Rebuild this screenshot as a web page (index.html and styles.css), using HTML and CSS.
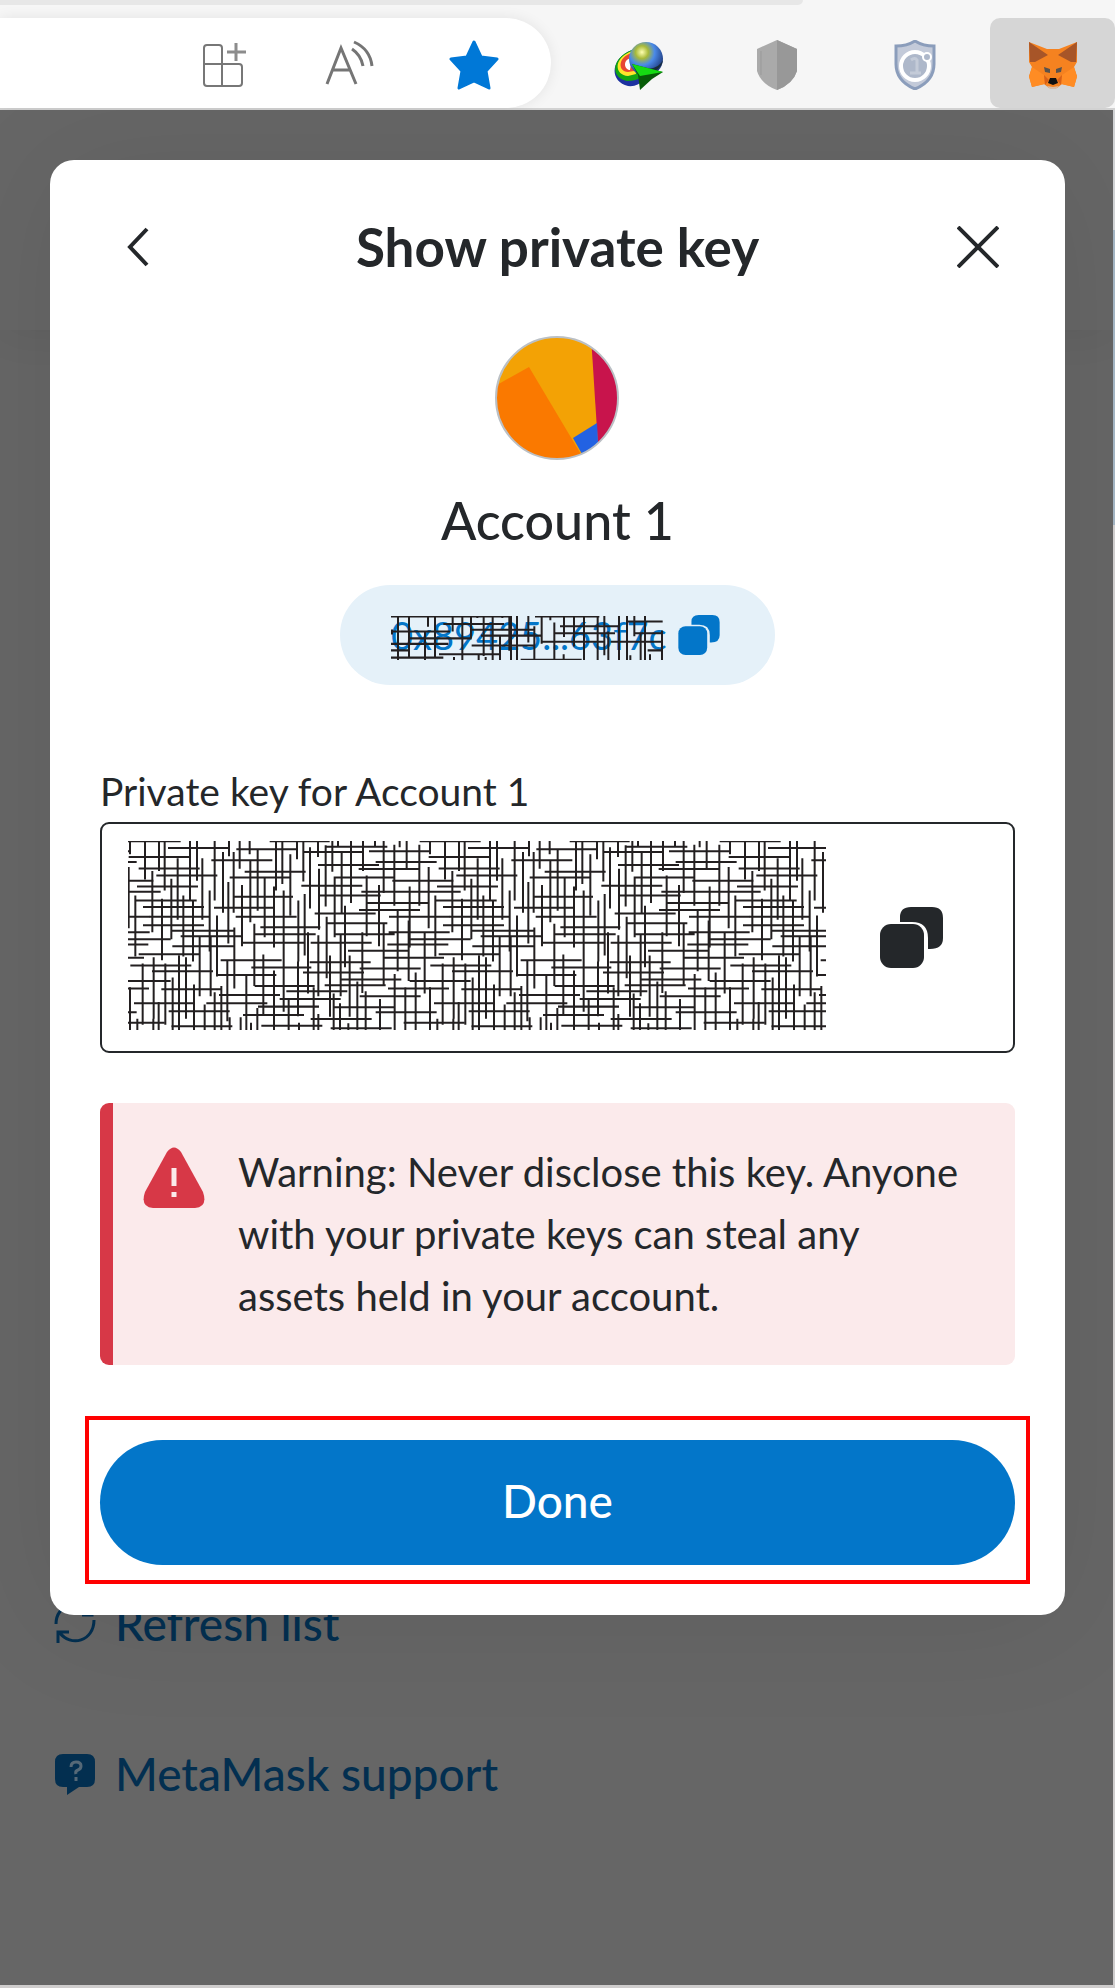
FILE: index.html
```html
<!DOCTYPE html>
<html lang="en">
<head>
<meta charset="utf-8">
<meta name="viewport" content="width=device-width, initial-scale=1">
<title>Show private key</title>
<link rel="stylesheet" href="styles.css">
</head>
<body>
<header class="browser">
  <div class="tab-strip"></div>
  <div class="toolbar">
    <div class="address">
      <button class="tool" aria-label="Add app"><svg viewBox="0 0 50 50" fill="none" stroke="#777" stroke-width="2"><path d="M5 24V8q0-3 3-3h12q3 0 3 3v38M5 24h35q3 0 3 3v16q0 3-3 3H8q-3 0-3-3V24"/><path d="M37 3v18M28 12h19" stroke-width="3" stroke="#8c8c8c"/></svg></button>
      <button class="tool" aria-label="Read aloud"><svg viewBox="0 0 50 50" fill="none" stroke="#757575" stroke-width="3"><path d="M3 44 17 8l15 36M8 30h19"/><path d="M28 9q9 6 11 17M30 2q16 7 18 24"/></svg></button>
      <button class="tool" aria-label="Favorite"><svg viewBox="0 0 50 50"><path fill="#0078d7" stroke="#0078d7" stroke-width="3" stroke-linejoin="round" d="m25 2 7 15 16 2-11 12 3 17-15-7-15 7 3-17L2 19l16-2z"/></svg></button>
    </div>
    <nav class="extensions" aria-label="Extensions">
      <button class="extension" aria-label="Download manager"><svg viewBox="0 0 50 50">
        <defs><radialGradient id="globe" cx=".38" cy=".3" r=".75"><stop offset="0" stop-color="#ffffb0"/><stop offset=".25" stop-color="#a8ba3a"/><stop offset=".5" stop-color="#4b8ae8"/><stop offset="1" stop-color="#172b68"/></radialGradient></defs>
        <path d="M18 10C-4 18-5 42 14 46q10 1 15-6L18 16z" fill="#1d32a0"/><path d="M18 10C-3 18-4 38 13 41q10 0 14-4L18 16z" fill="#12a512"/><path d="M18 11C-1 18 0 35 14 36l8-2-4-18z" fill="#ffe52b"/><path d="M18 13C3 17 4 32 14 32l6-1-2-14z" fill="#e74734"/><path d="M18 18c-10 1-8 12-2 12z" fill="#fff"/>
        <circle cx="32" cy="19" r="17" fill="url(#globe)"/><path d="M41 31q7-4 8-11-3 7-14 9z" fill="#172b38"/><path d="m18 24 31 8-11 7-12 11-2-15z" fill="#075c08"/><path d="m18 24 31 8-23 4z" fill="#16db13"/></svg></button>
      <button class="extension" aria-label="Privacy shield"><svg viewBox="0 0 50 50"><path d="M25 0 45 9v22Q41 44 25 50 9 44 5 31V9z" fill="#aaa"/><path d="M25 0 45 9v22Q41 44 25 50z" fill="#989898"/><path d="M9 11v24" stroke="#999"/></svg></button>
      <button class="extension" aria-label="Security scanner"><svg viewBox="0 0 50 50"><path d="M25 1q8 5 19 5v18q0 17-19 25Q6 41 6 24V6q11 0 19-5z" fill="#c3cad9" stroke="#8b9dbb" stroke-width="3"/><circle cx="25" cy="26" r="14" fill="#aeb8ca" stroke="#fff" stroke-width="4"/><circle cx="37" cy="17" r="4" fill="#aeb8ca" stroke="#fff" stroke-width="2"/><path d="M21 20q4-3 6 0v12M20 33h11" fill="none" stroke="#c4cbd8" stroke-width="3"/></svg></button>
      <button class="extension extension-active" aria-label="MetaMask"><svg viewBox="0 0 50 50"><path d="m1 2 18 7h12l18-7v20l-3 5 3 9-3 11-12-3-5 4h-8l-5-4-12 3L1 36l3-9-3-5z" fill="#f58220"/><path d="m1 2 19 13-13 7H2zM49 2 30 15l13 7h5z" fill="#a75528"/><path d="m4 27 12 8 1 9-13 3-3-10zm42 0-12 8-1 9 13 3 3-10z" fill="#ff8c24"/><path d="m16 35 5 5-4 5zm18 0-5 5 4 5z" fill="#d86118"/><path d="m16 27 6 2v4l-5-1zm18 0-6 2v4l5-1z" fill="#59524c"/><path d="m22 38 6 0 2 5-5 2-5-2z" fill="#111"/><path d="m19 46 6 1 6-1-3 3h-6z" fill="#d9bda7"/></svg></button>
    </nav>
  </div>
</header>

<main class="popup">
  <div class="page">
    <div class="page-header"></div>
    <nav class="page-links">
      <a class="page-link" href="#refresh"><svg class="link-icon" viewBox="0 0 42 42" fill="none" stroke="currentColor" stroke-width="3"><path d="M2 21C2 1 25-5 36 11M40 17c0 21-23 28-35 12M38 1v11H28M4 40V29h11"/></svg>Refresh list</a>
      <a class="page-link" href="#support"><svg class="link-icon" viewBox="0 0 42 42"><path fill="currentColor" d="M9 1h24q8 0 8 8v17q0 8-8 8h-8l-12 8v-8H9q-8 0-8-8V9q0-8 8-8z"/><path d="M17 14q0-5 5-5t5 4q0 3-3 4t-2 4M22 24v4" fill="none" stroke="#566977" stroke-width="3"/></svg>MetaMask support</a>
    </nav>
  </div>

  <section class="modal" role="dialog" aria-labelledby="dialog-title">
    <div class="modal-header">
      <button class="nav-button" aria-label="Back"><svg viewBox="0 0 42 42"><path d="M31 3 14 21l17 18"/></svg></button>
      <h1 class="title" id="dialog-title">Show private key</h1>
      <button class="nav-button" aria-label="Close"><svg viewBox="0 0 42 42"><path d="m1 1 40 40M41 1 1 41"/></svg></button>
    </div>

    <svg class="avatar" viewBox="0 0 125 125" role="img" aria-label="Account avatar">
      <clipPath id="disc"><circle cx="62" cy="62" r="61"/></clipPath>
      <g clip-path="url(#disc)"><path fill="#f3a205" d="M0 0h125v125H0z"/><path fill="#fa7900" d="m0 50 34-19 56 94H0z"/><path fill="#c8144c" d="M96 0h29v125h-21z"/><path fill="#2362e2" d="m78 102 24-15 2 38H91z"/></g>
      <circle cx="62" cy="62" r="61" fill="none" stroke="#bbc0c5" stroke-width="2"/>
    </svg>
    <h2 class="account">Account 1</h2>

    <button class="address-pill" aria-label="Copy account address">
      <span class="short-address">0x89425...63f7c
        <svg class="hatch" viewBox="213 141 816 128" preserveAspectRatio="none"><path d="M213 142H572M645 142H838M370 164H552M920 157H1028M720 171H900M213 186H390M455 181H640M268 206H455M483 198H665M703 191H885M945 191H1028M213 222H385M665 216H855M872 216H1028M455 227H640M213 241H268M357 252H540M983 241H1028M213 262H370M602 268H785M234 141V269M267 141V260M324 141V172M345 141V260M315 186V269M398 141V186M427 141V269M453 141V206M491 141V257M518 141V269M540 195V269M568 141V242M573 141V269M591 141V269M625 141V218M643 171V269M665 141V222M703 160V269M732 141V202M762 141V230M792 141V269M833 141V269M853 141V255M865 186V269M897 141V269M921 141V269M943 141V200M962 188V269M975 141V269M1026 183V269M216 180V195M472 141V147M547 141V147M691 141V153M402 260V269M476 255V269M497 260V269M731 252V269M931 255V269M990 252V269"/></svg>
      </span>
      <svg class="copy-small" viewBox="0 0 63 61"><path d="M20 15V10Q20 0 31 0h21q11 0 11 11v20q0 11-13 11h-2V31q0-16-16-16z"/><rect y="17" width="44" height="44" rx="11"/></svg>
    </button>

    <h3 class="key-label" id="key-label">Private key for Account 1</h3>
    <div class="key-box" role="group" aria-labelledby="key-label">
      <svg class="key-hatch" viewBox="115 242 2094 566" preserveAspectRatio="none">
        <defs><path id="strokes" d="M235 263h183M440 267h183M117 290h183M365 300h183M147 324h183M200 345h183M465 334h183M420 351h183M142 378h183M138 420h183M430 409h180M160 440h183M373 442h183M438 469h183M180 469h183M160 494h183M512 500h180M248 511h183M273 527h183M495 521h183M248 557h183M460 547h183M147 581h183M122 615h183M187 632h183M393 599h183M485 621h180M380 643h180M215 686h183M495 676h180M388 703h183M133 728h183M350 728h183M237 752h183M570 715h183M505 738h183M460 763h183M245 797h183M515 795h183M540 243h180M640 275h183M710 259h183M838 273h183M990 243h183M685 314h183M858 305h183M807 326h183M732 351h183M635 376h183M908 361h183M690 405h183M815 394h183M930 394h183M833 428h183M808 449h183M675 459h183M898 469h183M713 488h180M897 515h183M732 521h183M960 536h183M663 547h183M893 552h183M775 571h183M880 592h183M660 605h183M640 636h183M810 624h183M752 657h183M960 661h183M705 674h183M895 684h183M590 692h183M810 707h183M732 740h183M858 755h183M663 775h183M723 803h183M942 786h183M121 242V282M166 242V357M208 242V332M225 242V390M301 242V420M322 242V361M264 294V478M338 294V478M375 242V420M418 242V288M400 275V457M432 275V457M450 242V325M480 242V282M504 267V451M482 302V485M188 332V515M245 355V536M117 320V503M416 365V549M360 390V573M457 374V557M137 405V588M281 405V588M217 415V599M310 420V603M559 242V390M578 242V371M602 282V465M622 242V297M641 242V363M661 261V444M553 378V561M525 351V530M582 390V573M626 420V603M645 401V585M494 490V676M382 465V648M434 501V684M330 524V707M363 524V707M268 585V768M159 609V792M192 590V774M227 609V792M289 590V774M249 651V808M313 672V808M470 640V808M413 599V782M395 676V808M375 695V808M345 732V808M121 680V808M143 774V808M191 774V808M207 724V808M268 765V808M420 770V808M453 770V808M484 786V808M503 742V808M521 582V765M553 630V808M582 570V753M597 717V808M625 603V767M628 786V808M655 515V699M685 242V290M728 242V334M745 242V261M784 242V428M820 242V332M856 242V259M882 242V398M930 242V261M951 242V324M708 255V438M756 278V461M688 325V508M914 253V436M989 253V436M735 349V530M831 345V527M868 374V557M960 378V561M766 436V620M711 469V653M686 524V707M753 524V707M818 515V697M882 488V672M924 449V632M957 480V661M1005 515V699M721 585V768M780 585V768M803 663V808M828 692V808M672 680V808M686 760V808M732 699V808M751 728V808M776 788V808M871 715V808M915 640V808M978 636V808M947 680V808"/></defs>
        <use href="#strokes" x="-900"/><use href="#strokes"/><use href="#strokes" x="900"/><use href="#strokes" x="1800"/>
      </svg>
      <button class="copy-key" aria-label="Copy private key"><svg viewBox="0 0 63 61"><path d="M20 15V10Q20 0 31 0h21q11 0 11 11v20q0 11-13 11h-2V31q0-16-16-16z"/><rect y="17" width="44" height="44" rx="11"/></svg></button>
    </div>

    <div class="warning" role="alert">
      <svg class="warning-icon" viewBox="0 0 62 62"><path fill="#d73847" d="M24 5q7-9 14 0l22 40q5 15-8 16H10Q-3 60 2 45z"/><path d="M31 21v18M31 45v5" stroke="#fbeaeb" stroke-width="5"/></svg>
      <p class="warning-text">Warning: Never disclose this key. Anyone with your private keys can steal any assets held in your account.</p>
    </div>

    <div class="highlight"><button class="done">Done</button></div>
  </section>
</main>
</body>
</html>
```
FILE: styles.css
```css
* { box-sizing: border-box; }

body {
  display: flex;
  flex-direction: column;
  min-height: 100vh;
  margin: 0;
  background: linear-gradient(#d0d2d4 0 230px, #a3b4c2 230px 525px, #cfcdcd 525px);
  color: #24272a;
  font-family: Lato, "Liberation Sans", sans-serif;
}

button {
  margin: 0;
  padding: 0;
  border: 0;
  background: none;
  color: inherit;
  font: inherit;
}

svg { display: block; }

h1, h2, h3, p { margin: 0; }

/* Browser chrome */
.browser {
  height: 110px;
  border-bottom: 2px solid #d2d2d2;
  background: #f6f6f6;
}

.tab-strip {
  width: 72%;
  height: 5px;
  margin-bottom: 13px;
  border-radius: 0 0 8px 0;
  background: #e7e7e7;
}

.toolbar {
  display: flex;
  justify-content: space-between;
  height: 90px;
}

.address {
  display: flex;
  flex: 0 1 551px;
  align-items: center;
  justify-content: flex-end;
  gap: 75px;
  padding: 3px 52px 0 0;
  border-radius: 0 46px 46px 0;
  background: #fff;
  box-shadow: 0 0 14px rgb(0 0 0 / 8%);
}

.tool svg,
.extension svg {
  width: 50px;
  height: 50px;
}

.extensions {
  display: flex;
  gap: 13px;
}

.extension {
  display: grid;
  place-items: center;
  width: 125px;
  padding-top: 3px;
  border-radius: 10px;
}

.extension-active { background: #d6d6d6; }

/* Wallet popup: the dimmed page and the dialog share one grid cell */
.popup {
  display: grid;
  flex: 1;
  margin: 0 2px 3px 0;
  overflow: hidden;
  background: #666;
}

.page,
.modal { grid-area: 1 / 1; }

.page {
  display: flex;
  flex-direction: column;
  justify-content: space-between;
}

.page-header {
  height: 220px;
  box-shadow: 0 4px 40px rgb(0 0 0 / 6%);
}

.page-links {
  display: flex;
  flex-direction: column;
  gap: 88px;
  padding: 0 54px 180px;
}

.page-link {
  display: flex;
  align-items: center;
  gap: 19px;
  color: #032f50;
  font-size: 46px;
  font-weight: 500;
  line-height: 62px;
  text-decoration: none;
}

.link-icon {
  width: 42px;
  height: 42px;
}

/* Dialog */
.modal {
  display: flex;
  flex-direction: column;
  align-self: start;
  margin: 50px 48px 0 50px;
  padding: 56px 50px 31px;
  border-radius: 24px;
  background: #fff;
  box-shadow: 0 6px 120px rgb(0 0 0 / 8%);
}

.modal-header {
  display: flex;
  align-items: center;
  justify-content: space-between;
  padding: 0 16px;
}

.nav-button svg {
  width: 42px;
  height: 42px;
  fill: none;
  stroke: #24272a;
  stroke-width: 4;
}

.title {
  font-size: 53px;
  font-weight: 700;
  line-height: 62px;
}

.avatar {
  align-self: center;
  width: 125px;
  height: 125px;
  margin-top: 58px;
}

.account {
  margin-top: 28px;
  font-size: 52px;
  font-weight: 500;
  line-height: 62px;
  text-align: center;
}

.address-pill {
  display: flex;
  align-items: center;
  align-self: center;
  gap: 15px;
  height: 100px;
  margin-top: 34px;
  padding: 0 55px 0 51px;
  border-radius: 50px;
  background: #e5f1f9;
  color: #0376c9;
  font-size: 38px;
}

.short-address {
  position: relative;
  width: 272px;
  line-height: 44px;
  white-space: nowrap;
}

.hatch {
  position: absolute;
  inset: 3px 0 0;
  width: 100%;
  height: 100%;
}

.hatch,
.key-hatch {
  fill: none;
  stroke: #231f20;
  stroke-width: 6;
}

.copy-small {
  width: 42px;
  height: 40px;
  fill: currentColor;
}

.key-label {
  margin-top: 76px;
  font-size: 39px;
  font-weight: 400;
  line-height: 61px;
}

.key-box {
  display: flex;
  align-items: center;
  justify-content: space-between;
  height: 231px;
  padding: 0 70px 0 26px;
  border: 2px solid #24272a;
  border-radius: 9px;
}

.key-hatch {
  width: 698px;
  height: 189px;
  margin-bottom: 5px;
}

.copy-key svg {
  width: 63px;
  height: 61px;
  fill: #24272a;
}

.warning {
  display: flex;
  align-items: flex-start;
  gap: 33px;
  margin-top: 50px;
  padding: 38px 55px 38px 30px;
  border-left: 13px solid #d73847;
  border-radius: 9px;
  background: #fbeaeb;
}

.warning-icon {
  flex: none;
  width: 62px;
  height: 62px;
  margin-top: 6px;
}

.warning-text {
  font-size: 40px;
  line-height: 62px;
}

.highlight {
  margin: 51px -15px 0;
  padding: 20px 11px 15px;
  border: 4px solid #f00;
}

.done {
  display: block;
  width: 100%;
  height: 125px;
  padding-bottom: 5px;
  border-radius: 63px;
  background: #0376c9;
  color: #fff;
  font-size: 46px;
  font-weight: 500;
}
```
